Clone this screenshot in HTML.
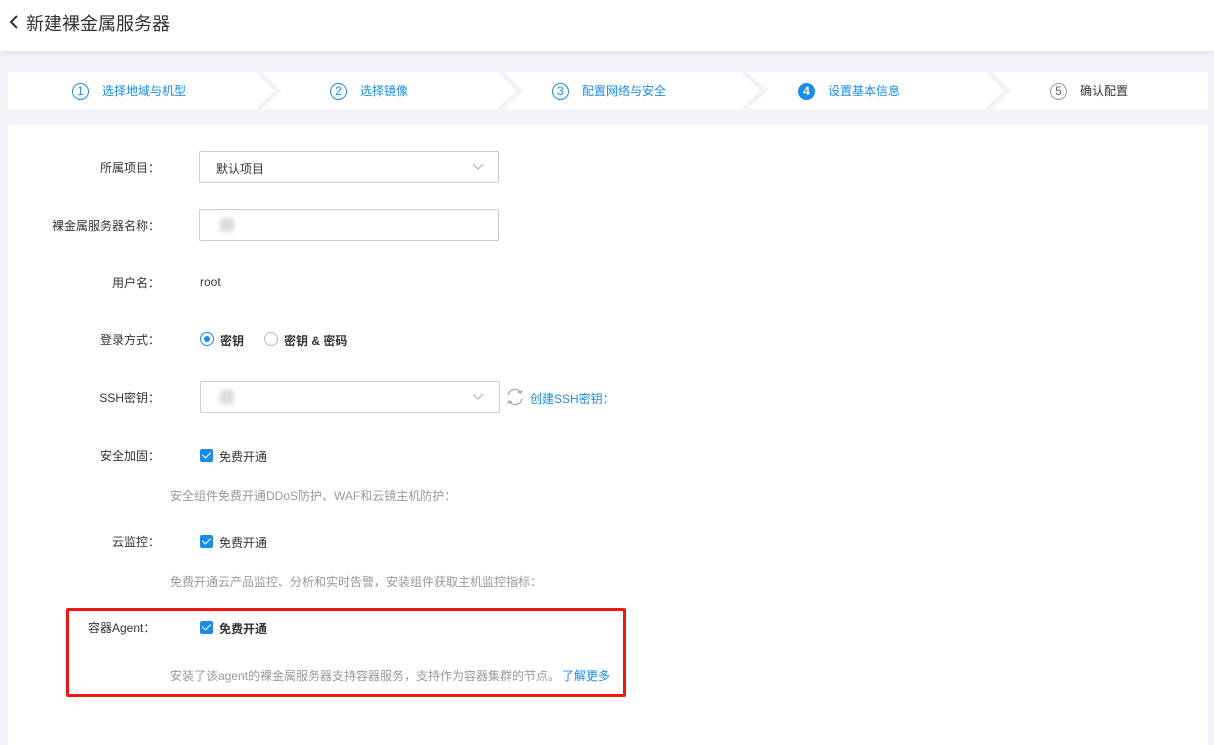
<!DOCTYPE html>
<html><head><meta charset="utf-8"><style>
*{margin:0;padding:0;box-sizing:border-box}
body{width:1214px;height:729px;background:#f3f3f7;font-family:"Liberation Sans","Noto Sans CJK SC",sans-serif;font-size:12px;color:#333;position:relative;overflow:hidden}
.a{position:absolute;white-space:nowrap}
.hdr{left:0;top:0;width:1214px;height:51px;background:#fff;box-shadow:0 2px 5px rgba(0,0,0,.08)}
.steps{left:8px;top:72px;width:1200px;height:37px;background:#fff}
.panel{left:8px;top:125px;width:1200px;height:620px;background:#fff}
.lab{text-align:right;width:150px;left:10px;color:#333}
.blue{color:#1a8de8}
.num{display:inline-block;width:17px;height:17px;border:1px solid #1a8de8;border-radius:50%;text-align:center;line-height:15px;font-size:12px;margin-right:10px;vertical-align:middle}
.box{border:1px solid #ccc;border-radius:2px;background:#fff;height:32px}
.chk{width:13px;height:13px;background:#1a8de8;border-radius:2px}
.chk:after{content:"";position:absolute;left:4px;top:1px;width:4px;height:7px;border:solid #fff;border-width:0 1.5px 1.5px 0;transform:rotate(45deg)}
.desc{color:#999}
</style></head><body>
<div class="a hdr"></div>
<svg class="a" style="left:8px;top:14px" width="12" height="16"><path d="M9 2 L3 8 L9 14" fill="none" stroke="#333" stroke-width="2"/></svg>
<div class="a" style="left:26px;top:10px;font-size:18px;color:#333">新建裸金属服务器</div>

<div class="a steps"></div>
<svg class="a" style="left:0;top:72px" width="1214" height="37">
<g fill="none" stroke="#f3f3f7" stroke-width="5">
<path d="M258 0 L278 18.5 L258 37"/><path d="M500 0 L520 18.5 L500 37"/><path d="M744 0 L764 18.5 L744 37"/><path d="M988 0 L1008 18.5 L988 37"/>
</g></svg>
<div class="a blue" style="left:72px;top:82px"><span class="num">1</span><span style="margin-left:3px">选择地域与机型</span></div>
<div class="a blue" style="left:330px;top:82px"><span class="num">2</span><span style="margin-left:3px">选择镜像</span></div>
<div class="a blue" style="left:552px;top:82px"><span class="num">3</span><span style="margin-left:3px">配置网络与安全</span></div>
<div class="a blue" style="left:798px;top:82px"><span class="num" style="background:#1a8de8;color:#fff;font-weight:bold">4</span><span style="margin-left:3px">设置基本信息</span></div>
<div class="a" style="left:1050px;top:82px;color:#333"><span class="num" style="border-color:#999;color:#666">5</span><span style="margin-left:3px">确认配置</span></div>

<div class="a panel"></div>

<div class="a lab" style="top:159px">所属项目：</div>
<div class="a box" style="left:199px;top:151px;width:300px"></div>
<div class="a" style="left:216px;top:160px">默认项目</div>
<svg class="a" style="left:472px;top:163px" width="12" height="8"><path d="M1 1 L6 6 L11 1" fill="none" stroke="#aaa"/></svg>

<div class="a lab" style="top:217px">裸金属服务器名称：</div>
<div class="a box" style="left:199px;top:209px;width:300px"></div>
<div class="a" style="left:220px;top:218px;width:14px;height:14px;background:#ddd;filter:blur(2px)"></div>

<div class="a lab" style="top:274px">用户名：</div>
<div class="a" style="left:200px;top:275px">root</div>

<div class="a lab" style="top:331px">登录方式：</div>
<div class="a" style="left:200px;top:332px;width:14px;height:14px;border:1px solid #1a8de8;border-radius:50%"></div>
<div class="a" style="left:204px;top:336px;width:6px;height:6px;background:#1a8de8;border-radius:50%"></div>
<div class="a" style="left:220px;top:332px;font-weight:bold">密钥</div>
<div class="a" style="left:264px;top:332px;width:14px;height:14px;border:1px solid #bbb;border-radius:50%"></div>
<div class="a" style="left:284px;top:332px;font-weight:bold">密钥 &amp; 密码</div>

<div class="a lab" style="top:389px">SSH密钥：</div>
<div class="a box" style="left:200px;top:381px;width:300px"></div>
<div class="a" style="left:220px;top:390px;width:14px;height:14px;background:#ddd;filter:blur(2px)"></div>
<svg class="a" style="left:472px;top:393px" width="12" height="8"><path d="M1 1 L6 6 L11 1" fill="none" stroke="#aaa"/></svg>
<svg class="a" style="left:505px;top:387px" width="20" height="20"><g fill="none" stroke="#aaa" stroke-width="1.3"><path d="M3 8 A7 7 0 0 1 16 6"/><path d="M17 12 A7 7 0 0 1 4 14"/><path d="M13 5 L16 6 L17 3"/><path d="M7 15 L4 14 L3 17"/></g></svg>
<div class="a blue" style="left:530px;top:390px">创建SSH密钥：</div>

<div class="a lab" style="top:447px">安全加固：</div>
<div class="a chk" style="left:200px;top:449px"></div>
<div class="a" style="left:219px;top:448px">免费开通</div>
<div class="a desc" style="left:170px;top:487px">安全组件免费开通DDoS防护、WAF和云镜主机防护：</div>

<div class="a lab" style="top:533px">云监控：</div>
<div class="a chk" style="left:200px;top:535px"></div>
<div class="a" style="left:219px;top:534px">免费开通</div>
<div class="a desc" style="left:170px;top:573px">免费开通云产品监控、分析和实时告警，安装组件获取主机监控指标：</div>

<div class="a" style="left:66px;top:608px;width:560px;height:89px;border:3px solid #f3150f;border-radius:2px"></div>
<div class="a" style="left:88px;top:619px">容器Agent：</div>
<div class="a chk" style="left:200px;top:621px"></div>
<div class="a" style="left:219px;top:620px;font-weight:bold">免费开通</div>
<div class="a desc" style="left:170px;top:667px">安装了该agent的裸金属服务器支持容器服务，支持作为容器集群的节点。<span class="blue" style="margin-left:2px">了解更多</span></div>
</body></html>
